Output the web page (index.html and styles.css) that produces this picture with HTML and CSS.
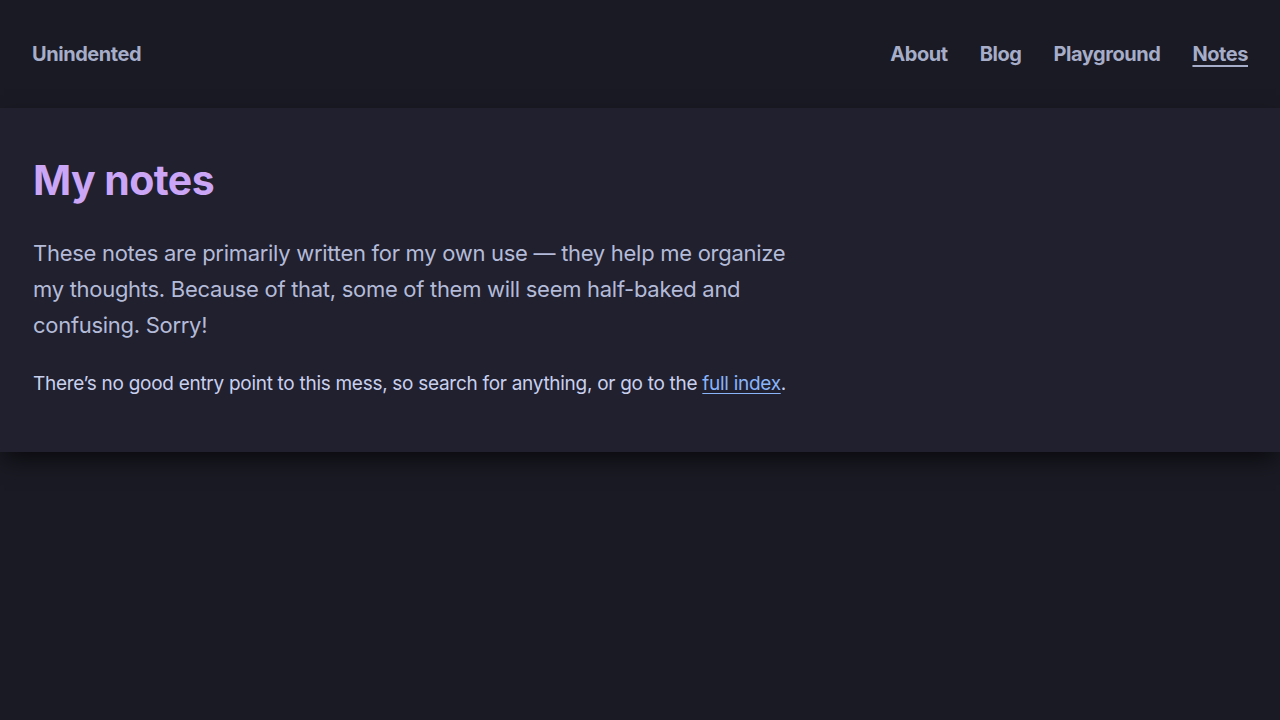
FILE: index.html
```html
<!DOCTYPE html>
<html lang="en">
<head>
<meta charset="utf-8">
<title>My notes</title>
<link rel="stylesheet" href="styles.css">
</head>
<body>
<header class="site-header">
  <a class="logo" href="#">Unindented</a>
  <nav class="nav">
    <a href="#">About</a>
    <a href="#">Blog</a>
    <a href="#">Playground</a>
    <a href="#" class="active">Notes</a>
  </nav>
</header>
<main class="intro">
  <div class="content">
    <h1>My notes</h1>
    <p class="lead">These notes are primarily written for my own use — they help me organize my thoughts. Because of that, some of them will seem half-baked and confusing. Sorry!</p>
    <p class="small">There’s no good entry point to this mess, so search for anything, or go to the <a href="#">full index</a>.</p>
  </div>
</main>
</body>
</html>
```
FILE: styles.css
```css
html, body {
  margin: 0;
  padding: 0;
  background: #1a1a24;
  font-family: Inter, "Noto Sans", sans-serif;
  letter-spacing: -0.018em;
  height: 100%;
}
.site-header {
  height: 108px;
  display: flex;
  align-items: center;
  justify-content: space-between;
  padding: 0 32px;
  background: #1a1a24;
}
.logo, .nav a {
  color: #a6adc8;
  font-weight: 700;
  font-size: 20px;
  letter-spacing: -0.022em;
  text-decoration: none;
}
.nav {
  display: flex;
  gap: 32px;
}
.nav a.active {
  text-decoration: underline;
  text-decoration-thickness: 2px;
  text-underline-offset: 4px;
}
.intro {
  background: #20202f;
  padding: 48px 32px 52px 33px;
  box-shadow: 0 10px 22px -4px rgba(0, 0, 0, 0.7);
  position: relative;
}
.content {
  max-width: 768px;
}
h1 {
  margin: 0 0 31px;
  color: #cba6f7;
  font-size: 41px;
  font-weight: 700;
  letter-spacing: -0.014em;
  line-height: 48px;
}
.lead {
  margin: 0 0 25px;
  color: #b4bbd8;
  font-size: 22px;
  line-height: 36px;
}
.small {
  margin: 0;
  color: #c9d0ee;
  font-size: 19px;
  line-height: 32px;
}
.small a {
  color: #89b4fa;
  text-decoration: underline;
  text-underline-offset: 3px;
}
```
